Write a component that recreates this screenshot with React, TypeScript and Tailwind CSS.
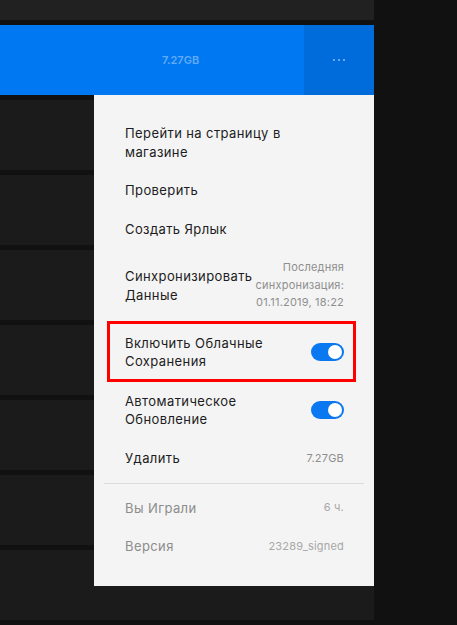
import React from 'react';

type Item = {
  label: string[];
  right?: string[];
  toggle?: boolean;
  muted?: boolean;
  highlight?: boolean;
  className: string;
};

const Toggle: React.FC = () => (
  <div className="w-[33px] h-[18px] rounded-full bg-[#0a78f0] flex items-center justify-end pr-[2.5px] shrink-0">
    <div className="w-[14px] h-[14px] rounded-full bg-white" />
  </div>
);

const items: Item[] = [
  { label: ['Перейти на страницу в', 'магазине'], className: 'py-[10px]' },
  { label: ['Проверить'], className: 'py-[10px]' },
  { label: ['Создать Ярлык'], className: 'py-[10px]' },
  {
    label: ['Синхронизировать', 'Данные'],
    right: ['Последняя', 'синхронизация:', '01.11.2019, 18:22'],
    className: 'h-[75px]',
  },
  { label: ['Включить Облачные', 'Сохранения'], toggle: true, highlight: true, className: 'py-[10.5px]' },
  { label: ['Автоматическое', 'Обновление'], toggle: true, className: 'py-[10.5px]' },
  { label: ['Удалить'], right: ['7.27GB'], className: 'py-[10px]' },
];

const info: Item[] = [
  { label: ['Вы Играли'], right: ['6 ч.'], muted: true, className: 'py-[10px]' },
  { label: ['Версия'], right: ['23289_signed'], muted: true, className: 'py-[10px]' },
];

const MenuRow: React.FC<{ item: Item }> = ({ item }) => (
  <div className={`relative flex items-center justify-between px-[31px] pr-[30px] ${item.className}`}>
    <div className={`text-[13px] leading-[18.5px] tracking-[0.4px] ${item.muted ? 'text-[#8c8c8c]' : 'text-[#1c1c22]'}`}>
      {item.label.map(l => (
        <div key={l}>{l}</div>
      ))}
    </div>
    {item.right && (
      <div className={`text-right text-[11px] leading-[17.5px] tracking-[0.2px] ${item.muted ? 'text-[#a8a8a8]' : 'text-[#8f8f8f]'}`}>
        {item.right.map(r => (
          <div key={r}>{r}</div>
        ))}
      </div>
    )}
    {item.toggle && <Toggle />}
    {item.highlight && (
      <div className="absolute left-[13px] right-[18px] -top-[2px] -bottom-[1px] border-[3px] border-[#ff0000] pointer-events-none" />
    )}
  </div>
);

export default function App() {
  return (
    <div className="relative w-[457px] h-[625px] overflow-hidden bg-[#111111] font-['Inter','Roboto',sans-serif]">
      {/* Game list */}
      <div className="w-[374px] -mt-[50px] flex flex-col gap-[5px]">
        <div className="h-[70px] bg-[#212121]" />
        <div className="h-[70px] flex">
          <div className="flex-1 bg-[#0078f2] flex items-center pl-[162px]">
            <span className="text-[11px] font-semibold text-[#62aaf6]">7.27GB</span>
          </div>
          <div className="w-[70px] bg-[#006bdb] flex items-center justify-center gap-[3px]">
            <span className="w-[2px] h-[2px] bg-[#62aaf6]" />
            <span className="w-[2px] h-[2px] bg-[#62aaf6]" />
            <span className="w-[2px] h-[2px] bg-[#62aaf6]" />
          </div>
        </div>
        {[0, 1, 2, 3, 4, 5, 6].map(i => (
          <div key={i} className="h-[70px] bg-[#1b1b1b]" />
        ))}
      </div>

      {/* Context menu */}
      <div className="absolute left-[94px] top-[95px] w-[280px] bg-[#f4f4f4] pt-[19px] pb-[20px]">
        {items.map(it => (
          <MenuRow key={it.label[0]} item={it} />
        ))}
        <div className="mx-[10px] mt-[5.5px] mb-[4.5px] h-px bg-[#dcdcdc]" />
        {info.map(it => (
          <MenuRow key={it.label[0]} item={it} />
        ))}
      </div>
    </div>
  );
}
